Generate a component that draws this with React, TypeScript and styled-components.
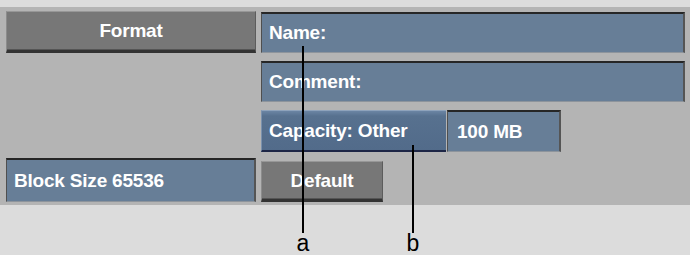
import React from "react";
import styled, { createGlobalStyle } from "styled-components";

const GlobalStyle = createGlobalStyle`
  html, body {
    margin: 0;
    padding: 0;
    background-color: #dcdcdc;
  }
  * {
    box-sizing: border-box;
  }
`;

const Page = styled.div`
  position: relative;
  width: 690px;
  height: 255px;
  padding-top: 7px;
  background-color: #dcdcdc;
  font-family: "Liberation Sans", Arial, sans-serif;
`;

const Panel = styled.div`
  display: grid;
  grid-template-columns: 250px 424px;
  grid-template-rows: 41px 41px 40px 44px;
  column-gap: 5px;
  row-gap: 8px;
  padding: 5px 5px 3px 6px;
  background-color: #b4b4b4;
`;

const Label = styled.span`
  color: #fff;
  font-size: 19px;
  font-weight: 700;
  letter-spacing: -0.2px;
  white-space: nowrap;
`;

const Field = styled.div<{ $col: number; $row: number; $width?: number }>`
  grid-column: ${(p) => p.$col};
  grid-row: ${(p) => p.$row};
  display: flex;
  align-items: center;
  width: ${(p) => (p.$width ? `${p.$width}px` : "auto")};
  padding-left: 7px;
  background-color: #677e97;
  border-top: 2px solid #262626;
  border-left: 1px solid #4f4f4f;
  border-right: 2px solid #555;
  border-bottom: 1px solid #8d949c;
`;

const GreyButton = styled.div<{ $col: number; $row: number; $width?: number; $height?: number }>`
  grid-column: ${(p) => p.$col};
  grid-row: ${(p) => p.$row};
  align-self: end;
  display: flex;
  align-items: center;
  justify-content: center;
  width: ${(p) => (p.$width ? `${p.$width}px` : "auto")};
  height: ${(p) => p.$height ?? 41}px;
  background-color: #777;
  border-top: 1px solid #979797;
  border-left: 1px solid #8c8c8c;
  border-right: 1px solid #5c5c5c;
  border-bottom: 3px solid #333;
  box-shadow: inset 0 -1px 0 #555;
`;

const CapacityRow = styled.div`
  grid-column: 2;
  grid-row: 3;
  display: flex;
  height: 42px;
  gap: 1px;
`;

const MenuButton = styled.div`
  display: flex;
  align-items: center;
  width: 185px;
  padding-left: 7px;
  background: linear-gradient(#6b85a4 0, #57718f 5px, #526b8a);
  border-top: 1px solid #8ea3bc;
  border-left: 1px solid #7a91ad;
  border-bottom: 2px solid #1d2646;
`;

const ValueField = styled(Field)`
  height: 42px;
  padding-left: 9px;
`;

const Leader = styled.div<{ $x: number; $top: number }>`
  position: absolute;
  left: ${(p) => p.$x}px;
  top: ${(p) => p.$top}px;
  width: 2px;
  height: ${(p) => 233 - p.$top}px;
  background-color: #000;
`;

const Letter = styled.span<{ $x: number }>`
  position: absolute;
  left: ${(p) => p.$x}px;
  top: 233px;
  color: #000;
  font-size: 23px;
  line-height: 21px;
  transform: translateX(-50%);
`;

const callouts = [
  { letter: "a", x: 302, top: 46 },
  { letter: "b", x: 412, top: 145 },
];

const App: React.FC = () => {
  return (
    <Page>
      <GlobalStyle />
      <Panel>
        <GreyButton $col={1} $row={1} $height={42}>
          <Label>Format</Label>
        </GreyButton>
        <Field $col={2} $row={1}>
          <Label>Name:</Label>
        </Field>
        <Field $col={2} $row={2}>
          <Label>Comment:</Label>
        </Field>
        <CapacityRow>
          <MenuButton>
            <Label>Capacity: Other</Label>
          </MenuButton>
          <ValueField $col={2} $row={3} $width={114}>
            <Label>100 MB</Label>
          </ValueField>
        </CapacityRow>
        <Field $col={1} $row={4}>
          <Label>Block Size 65536</Label>
        </Field>
        <GreyButton $col={2} $row={4} $width={122}>
          <Label>Default</Label>
        </GreyButton>
      </Panel>
      {callouts.map((c) => (
        <React.Fragment key={c.letter}>
          <Leader $x={c.x} $top={c.top} />
          <Letter $x={c.x + 1}>{c.letter}</Letter>
        </React.Fragment>
      ))}
    </Page>
  );
};

export default App;
